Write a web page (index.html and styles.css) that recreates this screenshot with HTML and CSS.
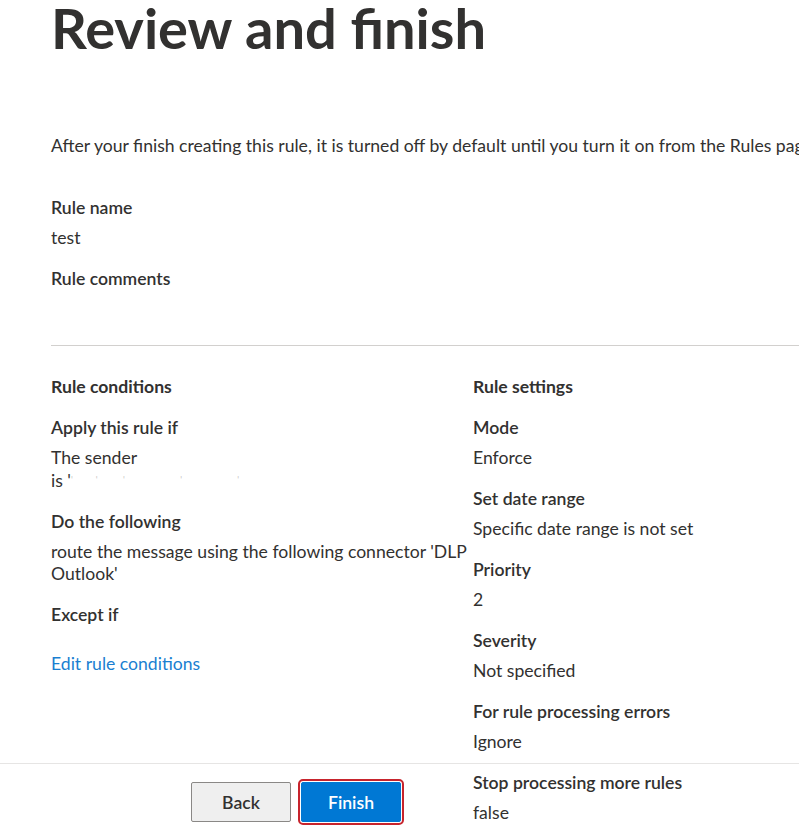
FILE: index.html
```html
<!DOCTYPE html>
<html lang="en">
<head>
<meta charset="utf-8">
<title>Review and finish</title>
<link rel="stylesheet" href="styles.css">
</head>
<body>
<div class="page">
  <h1 class="title">Review and finish</h1>
  <p class="intro">After your finish creating this rule, it is turned off by default until you turn it on from the Rules page.</p>

  <div class="field">
    <div class="label">Rule name</div>
    <div class="value">test</div>
  </div>
  <div class="field comments">
    <div class="label">Rule comments</div>
    <div class="value empty"></div>
  </div>

  <div class="divider"></div>

  <div class="columns">
    <div class="col col-left">
      <div class="section-title">Rule conditions</div>
      <div class="field">
        <div class="label">Apply this rule if</div>
        <div class="value">The sender<br>is <span class="redacted">'<span class="specks">'          '           '                        '                        '</span></span></div>
      </div>
      <div class="field">
        <div class="label">Do the following</div>
        <div class="value">route the message using the following connector 'DLP Outlook'</div>
      </div>
      <div class="field">
        <div class="label">Except if</div>
      </div>
      <a class="link" href="#">Edit rule conditions</a>
    </div>
    <div class="col col-right">
      <div class="section-title">Rule settings</div>
      <div class="field">
        <div class="label">Mode</div>
        <div class="value">Enforce</div>
      </div>
      <div class="field">
        <div class="label">Set date range</div>
        <div class="value">Specific date range is not set</div>
      </div>
      <div class="field">
        <div class="label">Priority</div>
        <div class="value">2</div>
      </div>
      <div class="field">
        <div class="label">Severity</div>
        <div class="value">Not specified</div>
      </div>
      <div class="field">
        <div class="label">For rule processing errors</div>
        <div class="value">Ignore</div>
      </div>
      <div class="field">
        <div class="label">Stop processing more rules</div>
        <div class="value">false</div>
      </div>
    </div>
  </div>
</div>

<div class="footer">
  <button class="btn btn-back" type="button">Back</button>
  <button class="btn btn-finish" type="button">Finish</button>
</div>
</body>
</html>
```

FILE: styles.css
```css
html, body {
  margin: 0;
  padding: 0;
  background: #ffffff;
  overflow: hidden;
}
body {
  font-family: "Lato", "Open Sans", sans-serif;
  font-size: 17.6px;
  line-height: 22px;
  color: #323130;
  width: 799px;
  height: 835px;
  position: relative;
}
.page {
  padding-left: 51px;
  width: 1000px;
}
.title {
  margin: 0;
  font-size: 56px;
  line-height: 56px;
  font-weight: 700;
  color: #323130;
  white-space: nowrap;
}
.intro {
  margin: 79px 0 0 0;
  white-space: nowrap;
}
.field {
  display: flex;
  flex-direction: column;
  gap: 8px;
  margin-bottom: 19px;
}
.intro + .field {
  margin-top: 40px;
}
.label {
  font-weight: 600;
}
.value.empty {
  height: 22px;
}
.comments {
  margin-bottom: 0;
}
.divider {
  margin-top: 25px;
  width: 748px;
  height: 1px;
  background: #d2d0ce;
}
.columns {
  display: flex;
  margin-top: 30px;
}
.col-left {
  width: 422px;
  flex: none;
}
.col-right {
  flex: none;
  width: 320px;
}
.section-title {
  font-weight: 700;
  margin-bottom: 19px;
}
.link {
  display: inline-block;
  margin-top: 8px;
  color: #1a7fd1;
  text-decoration: none;
}
.specks {
  white-space: pre;
  color: #c8c6c4;
  font-size: 9px;
  vertical-align: 4px;
}
.footer {
  position: absolute;
  left: 0;
  top: 763px;
  width: 799px;
  border-top: 1px solid #e6e5e4;
  padding: 18px 0 0 191px;
  display: flex;
  gap: 10px;
  box-sizing: border-box;
}
.btn {
  width: 100px;
  height: 40px;
  border-radius: 2px;
  font-family: inherit;
  font-size: 17.6px;
  font-weight: 600;
  cursor: pointer;
}
.btn-back {
  background: #efefef;
  border: 1px solid #8a8886;
  color: #323130;
}
.btn-finish {
  background: #0078d4;
  border: 1px solid #0078d4;
  color: #ffffff;
  outline: 2px solid #c7242d;
  outline-offset: 1px;
}
```
